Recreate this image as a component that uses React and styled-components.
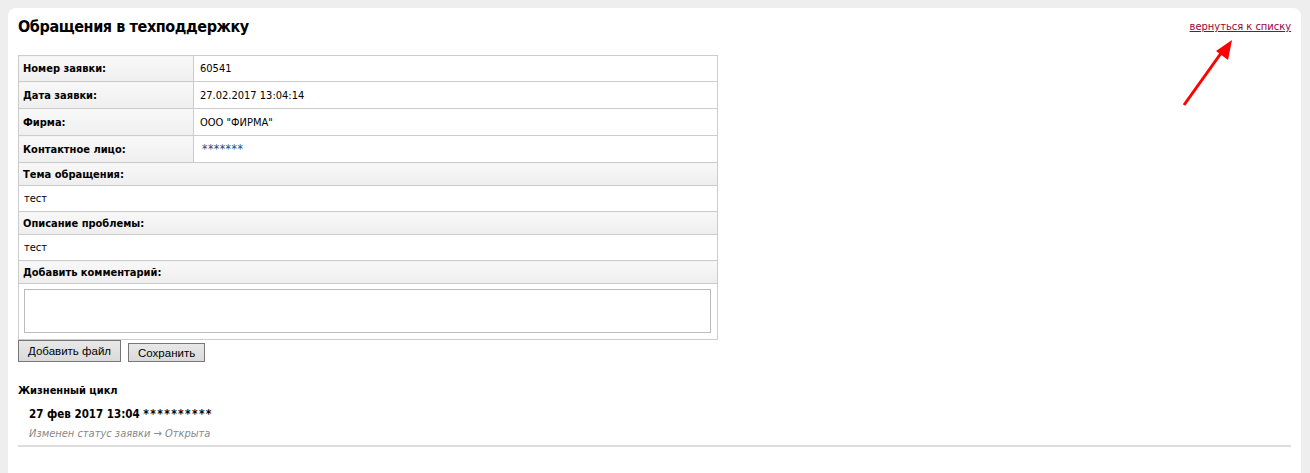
import React from "react";
import styled, { createGlobalStyle } from "styled-components";

const Global = createGlobalStyle`
  html, body { margin: 0; padding: 0; background: #eeeeee; }
  body { font-family: "DejaVu Sans Condensed", "DejaVu Sans", Tahoma, sans-serif; font-size: 11px; color: #000; }
`;

const Panel = styled.div`
  position: relative;
  margin: 8px 9px 0 8px;
  background: #fff;
  border-radius: 8px 8px 0 0;
  padding: 8px 10px 30px 10px;
  min-height: 430px;
  box-sizing: border-box;
`;

const Header = styled.div`
  display: flex;
  justify-content: space-between;
  align-items: flex-start;
  height: 39px;
`;

const Title = styled.h1`
  margin: 0;
  font-size: 16px;
  font-weight: bold;
  line-height: 22px;
  letter-spacing: -0.4px;
`;

const BackLink = styled.a`
  margin-top: 4px;
  color: #a0003c;
  font-size: 11px;
  text-decoration: underline;
  cursor: pointer;
`;

const Arrow = styled.svg`
  position: absolute;
  left: 1158px;
  top: 20px;
`;

const Table = styled.table`
  width: 700px;
  border-collapse: collapse;
  border: 1px solid #cccccc;
`;

const Row = styled.tr`
  height: ${(p) => p.$h}px;
`;

const Label = styled.td`
  width: 166px;
  border: 1px solid #cccccc;
  padding: 0 4px;
  font-weight: bold;
  background: linear-gradient(to bottom, #f8f8f8, #efefef);
  vertical-align: middle;
`;

const Value = styled.td`
  border: 1px solid #cccccc;
  padding: 0 6px;
  color: ${(p) => p.$color || "#000"};
  padding-left: ${(p) => p.$pl || 6}px;
  font-size: ${(p) => p.$fs || 11}px;
  letter-spacing: ${(p) => p.$ls || 0}px;
  vertical-align: middle;
`;

const Section = styled.td`
  border: 1px solid #cccccc;
  padding: 0 4px;
  font-weight: bold;
  background: linear-gradient(to bottom, #f8f8f8, #eeeeee);
`;

const Plain = styled.td`
  border: 1px solid #cccccc;
  padding: 0 5px;
`;

const AreaCell = styled.td`
  border: 1px solid #cccccc;
  padding: 5px 6px 6px 5px;
`;

const Area = styled.textarea`
  display: block;
  width: 100%;
  height: 44px;
  box-sizing: border-box;
  border: 1px solid #bbbbbb;
  resize: none;
  margin: 0;
`;

const Buttons = styled.div`
  display: flex;
  align-items: flex-end;
  gap: 7px;
`;

const Button = styled.button`
  font-family: "Liberation Sans", Arial, sans-serif;
  font-size: 11.5px;
  color: #000;
  background: linear-gradient(to bottom, #e8e8e8, #dadada);
  border: 1px solid #777;
  height: ${(p) => p.$h}px;
  padding: 0 9px;
  margin: 0;
`;

const LifeTitle = styled.div`
  margin-top: 22px;
  font-weight: bold;
  font-size: 11px;
`;

const Entry = styled.div`
  padding-left: 11px;
  margin-top: 10px;
  padding-bottom: 5px;
  border-bottom: 2px solid #dddddd;
`;

const EntryHead = styled.div`
  font-weight: bold;
  font-size: 11.5px;
`;

const Stars = styled.span`
  font-weight: bold;
  font-size: 12px;
  letter-spacing: 1.3px;
`;

const EntryNote = styled.div`
  margin-top: 6px;
  font-style: italic;
  color: #888888;
`;

export default function App() {
  return (
    <>
      <Global />
      <Panel>
        <Header>
          <Title>Обращения в техподдержку</Title>
          <BackLink>вернуться к списку</BackLink>
        </Header>
        <Arrow width="80" height="85" viewBox="0 0 80 85">
          <line x1="18" y1="77" x2="58" y2="21" stroke="#ff0000" strokeWidth="3" />
          <polygon points="66,12 62,32 50,23" fill="#ff0000" />
        </Arrow>
        <Table>
          <tbody>
            <Row $h={26}>
              <Label>Номер заявки:</Label>
              <Value>60541</Value>
            </Row>
            <Row $h={27}>
              <Label>Дата заявки:</Label>
              <Value>27.02.2017 13:04:14</Value>
            </Row>
            <Row $h={27}>
              <Label>Фирма:</Label>
              <Value>ООО "ФИРМА"</Value>
            </Row>
            <Row $h={27}>
              <Label>Контактное лицо:</Label>
              <Value $color="#1a4a7a" $pl={8} $fs={12} $ls={0.5}>*******</Value>
            </Row>
            <Row $h={23}>
              <Section colSpan={2}>Тема обращения:</Section>
            </Row>
            <Row $h={26}>
              <Plain colSpan={2}>тест</Plain>
            </Row>
            <Row $h={23}>
              <Section colSpan={2}>Описание проблемы:</Section>
            </Row>
            <Row $h={26}>
              <Plain colSpan={2}>тест</Plain>
            </Row>
            <Row $h={23}>
              <Section colSpan={2}>Добавить комментарий:</Section>
            </Row>
            <Row $h={56}>
              <AreaCell colSpan={2}>
                <Area />
              </AreaCell>
            </Row>
          </tbody>
        </Table>
        <Buttons>
          <Button $h={22}>Добавить файл</Button>
          <Button $h={19}>Сохранить</Button>
        </Buttons>
        <LifeTitle>Жизненный цикл</LifeTitle>
        <Entry>
          <EntryHead>
            27 фев 2017 13:04 <Stars>**********</Stars>
          </EntryHead>
          <EntryNote>Изменен статус заявки → Открыта</EntryNote>
        </Entry>
      </Panel>
    </>
  );
}
